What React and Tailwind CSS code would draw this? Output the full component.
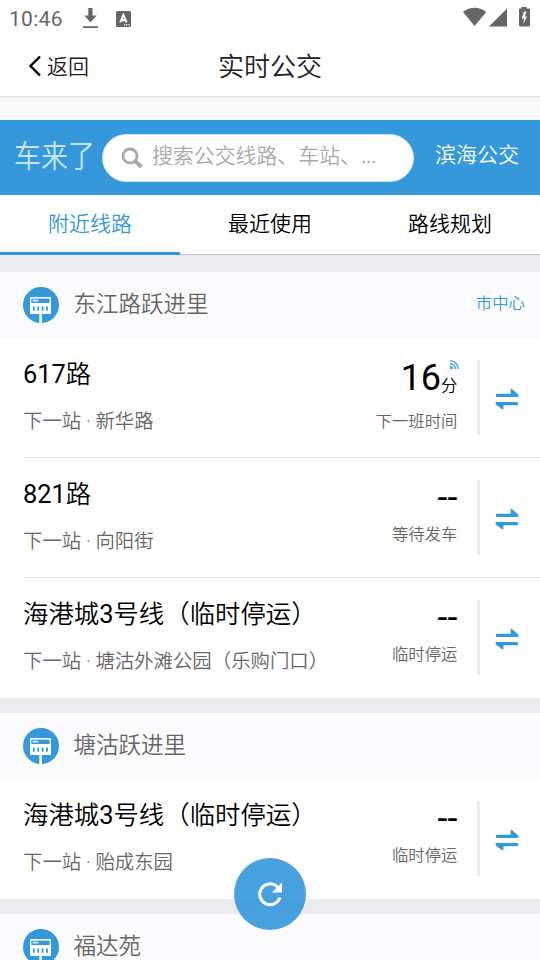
const BLUE = '#3498db';

function StopIcon() {
  return (
    <svg width="36" height="36" viewBox="0 0 36 36" className="block shrink-0">
      <circle cx="18" cy="18" r="18" fill={BLUE} />
      <rect x="7" y="10" width="21" height="17" rx="0.8" fill="#fff" />
      <rect x="8.3" y="11.6" width="18.3" height="4.4" fill={BLUE} />
      <rect x="9.6" y="12.6" width="5.8" height="2" fill="#fff" opacity="0.75" />
      <path d="M10.8 19.6v4.2M15.2 19.6v4.2M19.6 19.6v4.2M24 19.6v4.2" stroke={BLUE} strokeWidth="1.8" />
      <path d="M16.3 26h2.6v10h-2.6z" fill="#fff" />
      <path d="M15.5 27.5v8.3M19.7 27.5v8.3" stroke={BLUE} strokeWidth="0.8" />
    </svg>
  );
}

function SwapIcon() {
  return (
    <svg width="24" height="22" viewBox="0 0 24 22" className="block">
      <path d="M1.6 5.7H15.6V1.2Q16.4.4 17.2 1.2L23.2 6.4Q24 8.9 22.6 9H1.6Q0 7.4 1.6 5.7Z" fill={BLUE} />
      <path d="M22.4 17.3H8.4V21Q7.6 21.8 6.8 21L.8 16.4Q0 14.2 1.4 14H22.4Q24 15.6 22.4 17.3Z" fill={BLUE} />
    </svg>
  );
}

function SignalIcon() {
  return (
    <svg width="9" height="9" viewBox="0 0 9 9" fill="none" stroke="#5aaae2" strokeWidth="1.6" className="absolute -right-px top-0">
      <path d="M0 .8A8 8 0 0 1 8.200 9M0 3.600A5.400 5.400 0 0 1 5.400 9" />
      <path d="M0 5.500A3.500 3.500 0 0 1 3.200 9H0z" fill="#5aaae2" stroke="none" />
    </svg>
  );
}

function Label({ children }) {
  return children.split(/(\d+)/).map((part, i) =>
    /\d/.test(part) ? (
      <span key={i} className="font-normal">{part}</span>
    ) : (
      part
    )
  );
}

function Group({ name, tag, rows }) {
  return (
    <section>
      <div className="flex h-[66px] items-center bg-[#fbfbfd] pl-[23px] pr-[15px]">
        <StopIcon />
        <h2 className="mb-[3px] ml-[14.5px] flex-1 text-[22.5px] leading-[30px] text-[#666]">{name}</h2>
        {tag && <span className="mb-[3px] text-[16.4px] leading-6 text-[#3498db]">{tag}</span>}
      </div>
      {rows.map((row, i) => (
        <Route key={i} {...row} last={i === rows.length - 1} />
      ))}
    </section>
  );
}

function Route({ title, next, minutes, status, last }) {
  return (
    <div className="h-[120px] bg-white pl-[23px]">
      <div className={`flex h-full ${last ? '' : 'border-b border-[#e6e6e6]'}`}>
        <div className="min-w-0 flex-1 whitespace-nowrap pt-[17px]">
          <div className="text-[25.4px] leading-[38px] text-black">
            <Label>{title}</Label>
          </div>
          <div className="mt-[14px] text-[19.4px] leading-[29px] text-[#666]">{next}</div>
        </div>
        <div className="relative mt-[22px] w-[90.5px] shrink-0 whitespace-nowrap text-right">
          {minutes ? (
            <>
              <SignalIcon />
              <div className="flex h-[37px] items-baseline justify-end text-black">
                <span className="text-[36px] font-normal leading-[36px]">{minutes}</span>
                <span className="relative top-px text-[16.4px] leading-[20px]">分</span>
              </div>
              <div className="mt-[13px] text-[16.4px] leading-6 text-[#666]">{status}</div>
            </>
          ) : (
            <>
              <div className="h-[36px] pt-[3px] text-[36px] font-normal leading-[30px] text-black">--</div>
              <div className="mt-[7px] text-[16.4px] leading-6 text-[#666]">{status}</div>
            </>
          )}
        </div>
        <div className="ml-[19.5px] mt-[22px] h-[75px] w-[3px] shrink-0 bg-[#ebebeb]" />
        <div className="flex w-[60px] shrink-0 pl-[15px] pt-[50px]">
          <SwapIcon />
        </div>
      </div>
    </div>
  );
}

function StatusBar() {
  return (
    <div className="flex h-[38px] shrink-0 items-center bg-white pl-[9px] font-normal text-[#666]">
      <span className="w-[73px] text-[21px] leading-6 tracking-[0.3px]">10:46</span>
      <svg width="17" height="22" viewBox="0 0 17 22" fill="#666" className="block">
        <path d="M6.300 0h4.200v7.500h4.200l-6.200 7L2.300 7.500h4zM1 18.300h15v1.700H1z" />
      </svg>
      <div className="mb-px ml-[17px] flex h-4 w-[15px]">
        <svg width="15" height="16" viewBox="0 0 15 16">
          <rect width="15" height="16" rx="1.5" fill="#666" />
          <path d="M4.200 11.400 7.400 4l3.200 7.400M5.600 9.200h3.600" fill="none" stroke="#fff" strokeWidth="1.900" />
          <path d="M8 13.800h1.300m.8 0h1.300m.8 0h1.300" stroke="#fff" strokeWidth="1.2" />
        </svg>
      </div>
      <svg width="68" height="22" viewBox="0 0 68 22" fill="#666" className="mb-0.5 ml-auto mr-[9px] block">
        <path d="M0 5Q11.600-3.400 23.200 5L11.600 19z" />
        <path d="M26 19.500 44 1.500v18z" />
        <path d="M58.500 0h5v1.500h2.500q1 0 1 1V18.500q0 1-1 1H57q-1 0-1-1V2.500q0-1 1-1h1.500z" />
        <path d="m61 4.500-2.200 7h2.200l-.7 5.300 3.700-7.300h-2.200l1.700-5z" fill="#fff" />
      </svg>
    </div>
  );
}

export default function App() {
  const tabs = ['附近线路', '最近使用', '路线规划'];
  return (
    <main className="relative flex h-[960px] w-[540px] flex-col overflow-hidden bg-[#ebebf0] font-['Roboto','Noto_Sans_CJK_SC',sans-serif] font-[350]">
      <StatusBar />
      <header className="grid h-[58px] shrink-0 grid-cols-3 items-center bg-white">
        <div className="flex items-center pl-[28px]">
          <svg width="15" height="22" viewBox="0 0 15 22" fill="none" stroke="#000" strokeWidth="2.4" className="mb-0.5 block">
            <path d="M12 1.500 2.500 11 12 20.500" />
          </svg>
          <span className="ml-1 text-[21px] leading-[30px] text-[#222]">返回</span>
        </div>
        <h1 className="text-center text-[26px] leading-[36px] text-[#222]">实时公交</h1>
      </header>
      <div className="h-6 shrink-0 border-t border-[#dedede] bg-[#fafafa] shadow-[inset_0_1px_0_#efefef]" />
      <div className="flex h-[75px] shrink-0 items-start bg-[#3498db] pt-[14px]">
        <div className="w-[102px] pl-[14px]">
          <span className="inline-block origin-center scale-y-[1.12] font-['Noto_Sans_CJK_SC',sans-serif] text-[27px] leading-[42px] text-[#c9e4f7]">车来了</span>
        </div>
        <div className="flex h-12 w-[312px] items-center rounded-full border border-[#cfe3f1] bg-white pl-[18px]">
          <svg width="23" height="23" viewBox="0 0 23 23" fill="none" stroke="#aaa" className="block">
            <circle cx="9" cy="9" r="7" strokeWidth="2.8" />
            <path d="m14 14 6.500 6" strokeWidth="4" />
          </svg>
          <span className="mb-[5px] ml-2 whitespace-nowrap text-[20.9px] leading-[30px] text-[#a9a9a9]">
            搜索公交线路、车站、<span className="font-normal tracking-[-0.5px]">...</span>
          </span>
        </div>
        <span className="ml-[21px] mt-[6px] text-[21px] leading-[30px] text-white">滨海公交</span>
      </div>
      <nav className="grid h-[60px] shrink-0 grid-cols-3 bg-white text-center text-[21px] leading-[58px]">
        {tabs.map((t, i) => (
          <div key={t} className={`h-[60px] ${i === 0 ? 'border-b-[3px] border-[#3498db] text-[#3498db]' : 'border-b border-[#c8c7cc] text-black'}`}>
            {t}
          </div>
        ))}
      </nav>
      <div className="mt-[17px] flex shrink-0 flex-col gap-[15px]">
        <Group
          name="东江路跃进里"
          tag="市中心"
          rows={[
            { title: '617路', next: '下一站 · 新华路', minutes: '16', status: '下一班时间' },
            { title: '821路', next: '下一站 · 向阳街', status: '等待发车' },
            { title: '海港城3号线（临时停运）', next: '下一站 · 塘沽外滩公园（乐购门口）', status: '临时停运' },
          ]}
        />
        <Group
          name="塘沽跃进里"
          rows={[{ title: '海港城3号线（临时停运）', next: '下一站 · 贻成东园', status: '临时停运' }]}
        />
        <Group name="福达苑" rows={[]} />
      </div>
      <button className="absolute left-[234px] top-[858px] flex size-[72px] items-center justify-center rounded-full bg-[#3498db]/90">
        <svg width="26" height="26" viewBox="0 0 26 26" className="block">
          <path d="M23 16.500A10.400 10.400 0 1 1 19.800 5.200L22 8" fill="none" stroke="#fff" strokeWidth="3" />
          <path d="M25 1.500v10H15z" fill="#fff" />
        </svg>
      </button>
    </main>
  );
}
